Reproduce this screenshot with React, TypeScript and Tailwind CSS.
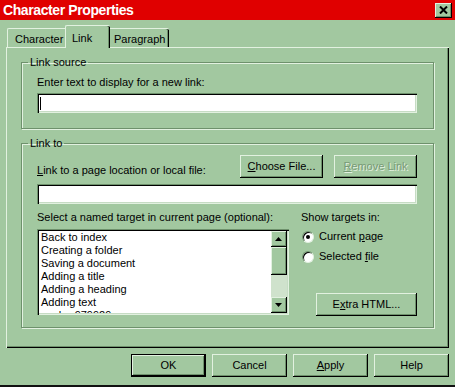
import React from 'react'

const raised =
  'bg-[#a2c8a0] shadow-[inset_-1px_-1px_0_#000,inset_1px_1px_0_#e2f1e0,inset_-2px_-2px_0_#6e916c]'
const sunken =
  'bg-white shadow-[inset_1px_1px_0_#6e916c,inset_2px_2px_0_#000,inset_-1px_-1px_0_#e2f1e0,inset_-2px_-2px_0_#c6dcc4]'
const group =
  'border border-[#6e916c] shadow-[1px_1px_0_#e2f1e0,inset_1px_1px_0_#e2f1e0] w-[413px] pl-[6px] min-w-0'

function Btn({
  children,
  className = '',
  isDefault = false,
}: {
  children: React.ReactNode
  className?: string
  isDefault?: boolean
}) {
  return (
    <div
      className={`flex items-center justify-center h-[23px] ${raised} ${
        isDefault ? 'border border-black' : ''
      } ${className}`}
    >
      {children}
    </div>
  )
}

function Radio({ checked, children }: { checked?: boolean; children: React.ReactNode }) {
  return (
    <div className="flex items-center gap-[5px] h-[13px] leading-[13px]">
      <div className="w-[12px] h-[12px] rounded-full bg-white border border-t-[#6e916c] border-l-[#6e916c] border-r-[#e2f1e0] border-b-[#e2f1e0] shadow-[inset_1px_1px_0_#000] flex items-center justify-center">
        {checked && <div className="w-[4px] h-[4px] rounded-full bg-black" />}
      </div>
      <span>{children}</span>
    </div>
  )
}

function Arrow({ up }: { up?: boolean }) {
  return (
    <div className={`h-[16px] flex items-center justify-center ${raised}`}>
      <svg width="7" height="4" viewBox="0 0 7 4" className="-mt-[1px] -ml-[1px]">
        <path d={up ? 'M3.5 0L7 4H0z' : 'M0 0H7L3.5 4z'} fill="#000" />
      </svg>
    </div>
  )
}

const targets = [
  'Back to index',
  'Creating a folder',
  'Saving a document',
  'Adding a title',
  'Adding a heading',
  'Adding text',
  'anchor979929',
]

export default function App() {
  return (
    <div className="w-[455px] h-[387px] bg-[#a2c8a0] flex flex-col overflow-hidden text-black text-[11px] font-['Liberation_Sans',Arial,sans-serif] select-none">
      {/* title bar */}
      <div className="h-[20px] bg-[#e00000] flex items-center justify-between pl-[3px] pr-[3px]">
        <span className="text-white font-bold text-[14px] leading-[20px] tracking-[-0.4px]">
          Character Properties
        </span>
        <div className={`w-[17px] h-[15px] flex items-center justify-center ${raised}`}>
          <svg width="9" height="8" viewBox="0 0 9 8" className="-ml-[1px] -mt-[1px]">
            <path d="M1 0.5L8 7.5M8 0.5L1 7.5" stroke="#000" strokeWidth="2" />
          </svg>
        </div>
      </div>

      {/* tabs */}
      <div className="h-[27px] flex items-end pl-[7px]">
        <div className="w-[58px] h-[19px] border-t border-l border-[#e2f1e0] rounded-tl-[2px] pl-[7px] pt-[4px] leading-[13px]">
          Character
        </div>
        <div className="relative z-10 -mb-[1px] w-[45px] h-[23px] bg-[#a2c8a0] border-t border-l border-[#e2f1e0] rounded-tl-[2px] rounded-tr-[2px] shadow-[inset_-1px_0_0_#000,inset_-2px_0_0_#6e916c] pl-[6px] pt-[6px] leading-[13px]">
          Link
        </div>
        <div className="w-[59px] h-[19px] border-t border-[#e2f1e0] rounded-tr-[2px] shadow-[inset_-1px_0_0_#000,inset_-2px_0_0_#6e916c] pl-[4px] pt-[4px] leading-[13px]">
          Paragraph
        </div>
      </div>

      {/* tab panel */}
      <div className="mx-[6px] h-[301px] border-t border-l border-[#e2f1e0] shadow-[inset_-1px_-1px_0_#000,inset_-2px_-2px_0_#6e916c] pt-[8px] pl-[14px]">
        <fieldset className={`${group} h-[73px]`}>
          <legend className="px-[2px] leading-[13px]">Link source</legend>
          <div className="ml-[9px]">
            <div className="mt-[7px] leading-[13px]">Enter text to display for a new link:</div>
            <div className={`mt-[4px] h-[20px] w-[380px] ${sunken} flex items-center`}>
              <div className="ml-[3px] w-[1px] h-[13px] bg-black" />
            </div>
          </div>
        </fieldset>

        <fieldset className={`${group} h-[191px] mt-[8px]`}>
          <legend className="px-[2px] leading-[13px]">Link to</legend>
          <div className="ml-[9px]">
            <div className="mt-[5px] w-[380px] flex items-end justify-between">
              <div className="leading-[13px] mb-[1px]">
                <span className="underline">L</span>ink to a page location or local file:
              </div>
              <div className="flex gap-[11px]">
                <Btn className="w-[83px]">
                  <span>
                    <span className="underline">C</span>hoose File...
                  </span>
                </Btn>
                <Btn className="w-[83px]">
                  <span className="text-[#789a76] [text-shadow:1px_1px_0_#e2f1e0]">
                    <span className="underline">R</span>emove Link
                  </span>
                </Btn>
              </div>
            </div>
            <div className={`mt-[6px] h-[20px] w-[380px] ${sunken}`} />

            <div className="mt-[7px] flex">
              <div className="w-[264px]">
                <div className="leading-[13px]">Select a named target in current page (optional):</div>
                <div className="mt-[5px] w-[252px] h-[86px] flex bg-white shadow-[inset_1px_1px_0_#6e916c,inset_2px_2px_0_#000,inset_-1px_-1px_0_#e2f1e0,inset_-2px_-2px_0_#c6dcc4] p-[2px]">
                  <div className="flex-1 overflow-hidden pl-[2px] leading-[13px]">
                    {targets.map((t) => (
                      <div key={t} className="whitespace-nowrap">
                        {t}
                      </div>
                    ))}
                  </div>
                  <div className="w-[16px] flex flex-col">
                    <Arrow up />
                    <div className={`h-[28px] ${raised}`} />
                    <div className="flex-1 bg-[#cfe2cc]" />
                    <Arrow />
                  </div>
                </div>
              </div>
              <div className="flex flex-col">
                <div className="leading-[13px]">Show targets in:</div>
                <div className="mt-[6px] ml-[1px]">
                  <Radio checked>
                    Current <span className="underline">p</span>age
                  </Radio>
                </div>
                <div className="mt-[7px] ml-[1px]">
                  <Radio>
                    Selected <span className="underline">f</span>ile
                  </Radio>
                </div>
                <Btn className="mt-[30px] ml-[15px] w-[101px]">
                  <span>
                    E<span className="underline">x</span>tra HTML...
                  </span>
                </Btn>
              </div>
            </div>
          </div>
        </fieldset>
      </div>

      {/* dialog buttons */}
      <div className="mt-[6px] flex justify-end gap-[6px] pr-[6px]">
        <Btn isDefault className="w-[75px]">
          OK
        </Btn>
        <Btn className="w-[75px]">Cancel</Btn>
        <Btn className="w-[75px]">
          <span>
            <span className="underline">A</span>pply
          </span>
        </Btn>
        <Btn className="w-[75px]">Help</Btn>
      </div>

      <div className="mt-auto h-[2px] bg-[#111]" />
    </div>
  )
}
